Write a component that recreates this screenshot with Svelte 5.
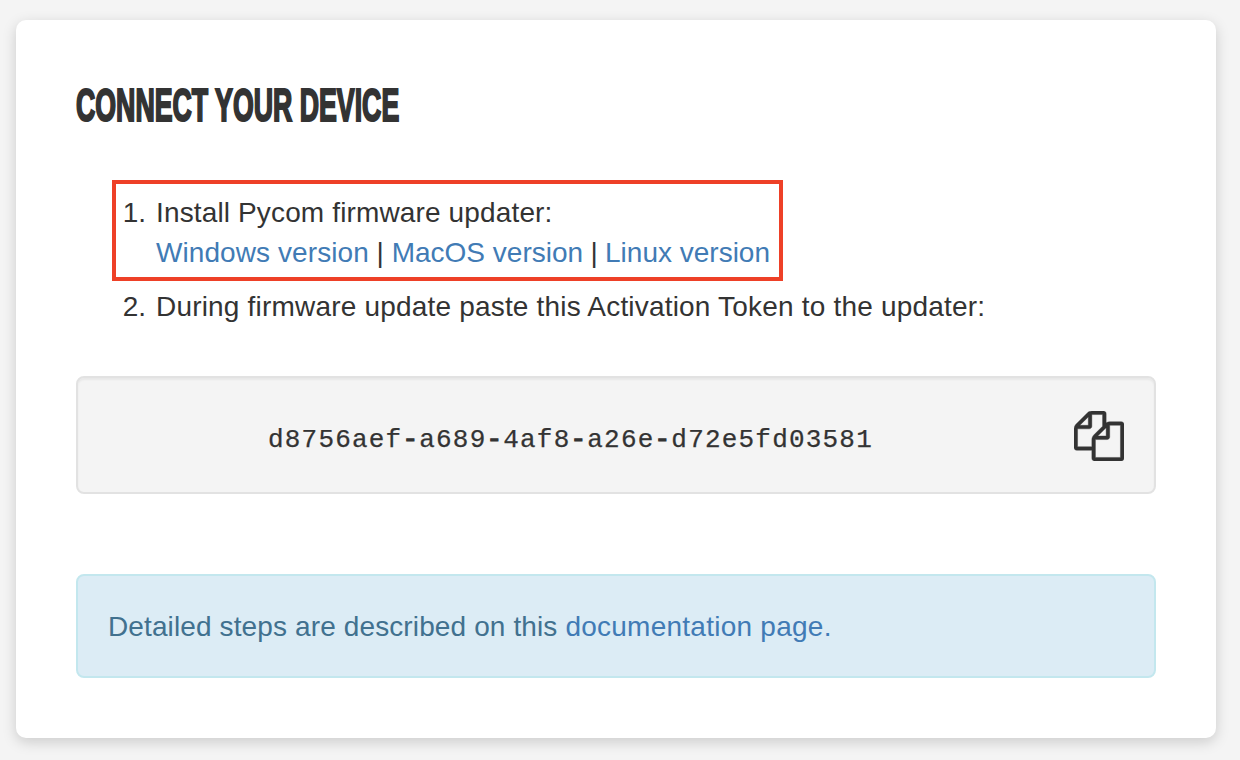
<script>
  const token = 'd8756aef-a689-4af8-a26e-d72e5fd03581';
  const parts = token.split('-');
</script>

<main>
  <h1><span>CONNECT YOUR DEVICE</span></h1>
  <ol>
    <li class="marked">
      <b>1.</b>
      <div><span class="intro">Install Pycom firmware updater:</span><br /><a href="#windows" class="windows">Windows version</a> | <a href="#mac">MacOS version</a><span class="bar">&nbsp;|&nbsp;</span><a href="#linux">Linux version</a></div>
    </li>
    <li class="second"><b>2.</b><div>During firmware update paste this Activation Token to the updater:</div></li>
  </ol>
  <section class="token">
    <code>{#each parts as part, i}{#if i > 0}<i>-</i>{/if}{part}{/each}</code>
    <svg width="50" height="50" viewBox="0 0 1792 1792" aria-label="Copy">
      <path fill="#333" stroke="#333" stroke-width="14" d="M1696 384q40 0 68 28t28 68v1216q0 40-28 68t-68 28h-960q-40 0-68-28t-28-68v-288h-544q-40 0-68-28t-28-68v-672q0-40 20-88t48-76l408-408q28-28 76-48t88-20h416q40 0 68 28t28 68v328q68-40 128-40h416zm-544 213l-299 299h299v-299zm-640-384l-299 299h299v-299zm196 647l316-316v-416h-384v416q0 40-28 68t-68 28h-416v640h512v-256q0-40 20-88t48-76zm956 804v-1152h-384v416q0 40-28 68t-68 28h-416v640h896z" />
    </svg>
  </section>
  <section class="info"><span>Detailed steps are described on this&nbsp;</span><a href="#docs">documentation page.</a></section>
</main>

<style>
  :global(html) { background: #f4f4f4; }
  :global(body) { margin: 0; min-height: 760px; background: #f4f4f4; }
  :global(#app) { display: flow-root; min-height: 760px; }
  main { box-sizing: border-box; width: 1200px; height: 718px; margin: 20px 0 0 16px; padding: 60px; display: flex; flex-direction: column; background: #fff; border-radius: 10px; box-shadow: 0 4px 14px rgba(0,0,0,.17); font: 28px/40px "Liberation Sans", Arial, sans-serif; color: #333; }
  h1 { margin: 0; height: 52px; font-size: 46px; line-height: 50px; white-space: nowrap; }
  h1 span { display: inline-block; transform: scaleX(.581); transform-origin: left; -webkit-text-stroke: 2.2px #333; }
  ol { list-style: none; margin: 48px 0 0 36px; padding: 0; }
  li { display: flex; white-space: nowrap; }
  b { font-weight: 400; width: 34px; text-align: right; margin-right: 10px; box-sizing: border-box; }
  .marked { box-sizing: border-box; width: 671px; height: 101px; border: 4px solid #ee4027; padding-top: 9px; }
  .marked b { width: 30px; }
  .intro { letter-spacing: .14px; }
  .windows { letter-spacing: .08px; }
  .bar { letter-spacing: -.3px; }
  .second { margin-top: 6px; }
  .second div { letter-spacing: .19px; }
  a { color: #417bb5; text-decoration: none; }
  .token { box-sizing: border-box; height: 118px; margin-top: 49px; border: 2px solid #e2e2e2; border-radius: 8px; background: #f4f4f4; box-shadow: inset 0 2px 2px rgba(0,0,0,.05); display: flex; align-items: center; padding: 2px 30px 0 190px; justify-content: space-between; }
  code { font: 26px/36px "Liberation Mono", monospace; letter-spacing: 1.2px; padding-top: 8px; -webkit-text-stroke: .25px #333; }
  code i { font-style: normal; -webkit-text-stroke: 1.2px #333; }
  .info { box-sizing: border-box; height: 104px; margin-top: 80px; border: 2px solid #c3e7ee; border-radius: 8px; background: #dcecf5; color: #41718f; padding: 31px 30px 29px; display: flex; white-space: nowrap; }
  .info span { letter-spacing: .12px; }
  .info a { letter-spacing: .25px; }
</style>
